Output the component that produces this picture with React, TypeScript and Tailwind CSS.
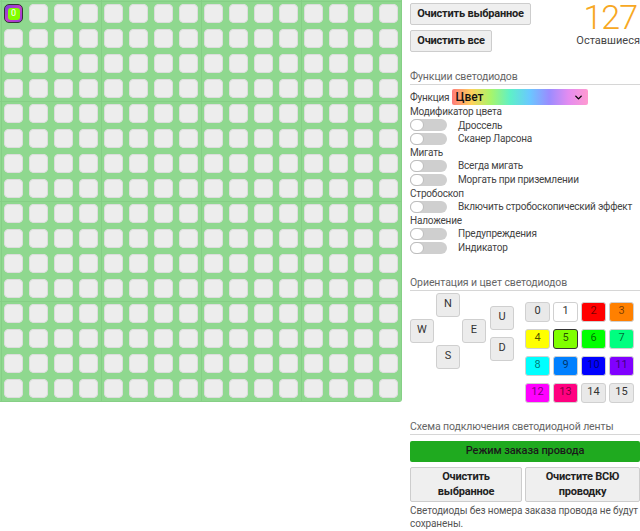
import { ChevronDown } from "lucide-react";

const swatches = [
  { n: 0, bg: "bg-[#e9e9e9]", text: "text-[#333]" },
  { n: 1, bg: "bg-white", text: "text-[#333]" },
  { n: 2, bg: "bg-[#ff0000]", text: "text-black/55" },
  { n: 3, bg: "bg-[#ff8000]", text: "text-black/55" },
  { n: 4, bg: "bg-[#ffff00]", text: "text-black/70" },
  { n: 5, bg: "bg-[#80ff00]", text: "text-black/70", active: true },
  { n: 6, bg: "bg-[#00ff00]", text: "text-black/60" },
  { n: 7, bg: "bg-[#00ff80]", text: "text-black/60" },
  { n: 8, bg: "bg-[#00ffff]", text: "text-black/55" },
  { n: 9, bg: "bg-[#0080ff]", text: "text-black/60" },
  { n: 10, bg: "bg-[#0000ff]", text: "text-black/55" },
  { n: 11, bg: "bg-[#8000ff]", text: "text-black/55" },
  { n: 12, bg: "bg-[#ff00ff]", text: "text-black/55" },
  { n: 13, bg: "bg-[#ff0080]", text: "text-black/55" },
  { n: 14, bg: "bg-[#e9e9e9]", text: "text-[#333]" },
  { n: 15, bg: "bg-[#e9e9e9]", text: "text-[#333]" },
];

const functionGroups = [
  { title: "Модификатор цвета", items: ["Дроссель", "Сканер Ларсона"] },
  { title: "Мигать", items: ["Всегда мигать", "Моргать при приземлении"] },
  { title: "Стробоскоп", items: ["Включить стробоскопический эффект"] },
  { title: "Наложение", items: ["Предупреждения", "Индикатор"] },
];

function Toggle() {
  return (
    <div className="relative h-[12px] w-[37px] shrink-0 rounded-full bg-[#cfcfcf]">
      <div className="absolute left-0 top-0 h-[12px] w-[14px] rounded-full border border-[#bdbdbd] bg-white" />
    </div>
  );
}

function SectionTitle({ children }: { children: string }) {
  return (
    <div className="border-b border-[#d6d6d6] pb-[1px] text-[10.5px] leading-[13px] tracking-[-0.1px] text-[#666]">
      {children}
    </div>
  );
}

function Cell({ index }: { index: number }) {
  if (index === 0) {
    return (
      <div className="flex h-[19px] w-[19px] items-center justify-center rounded-[5px] border border-[#333] bg-[linear-gradient(135deg,#7a3ee0,#c040c8,#9a3ad8)]">
        <div className="flex h-[12px] w-[12px] items-center justify-center rounded-[3px] bg-[#80ff00] text-[9px] leading-none text-white">
          0
        </div>
      </div>
    );
  }
  return (
    <div className="h-[19px] w-[19px] rounded-[5px] bg-[#ededed] shadow-[inset_0_0_0_1px_#dcdcdc]" />
  );
}

function DirButton({ label, className }: { label: string; className: string }) {
  return (
    <button
      className={`flex h-[24px] w-[24px] items-center justify-center rounded-[3px] border border-[#cfcfcf] bg-[#ececec] text-[11px] text-[#333] ${className}`}
    >
      {label}
    </button>
  );
}

export default function App() {
  return (
    <div className="flex h-[531px] w-[640px] gap-[8px] bg-white font-['Roboto',sans-serif] text-[#333]">
      {/* LED matrix */}
      <div className="grid h-[402px] w-[402px] shrink-0 grid-cols-[repeat(16,19px)] grid-rows-[repeat(16,19px)] gap-[6px] rounded-br-[3px] bg-[#8fd88f] p-[4px] [background-image:linear-gradient(to_right,#86cf86_1px,transparent_1px),linear-gradient(to_bottom,#86cf86_1px,transparent_1px)] [background-position:101px_101px] [background-size:100px_100px]">
        {Array.from({ length: 256 }, (_, i) => (
          <Cell key={i} index={i} />
        ))}
      </div>

      {/* Side panel */}
      <div className="flex w-[230px] flex-col">
        <div className="flex justify-between">
          <div className="flex flex-col gap-[5px] pt-[3px]">
            <button className="h-[22px] w-[121px] whitespace-nowrap rounded-[2px] border border-[#cdcdcd] bg-[#efefef] text-[11px] font-bold tracking-[-0.2px] text-[#222]">
              Очистить выбранное
            </button>
            <button className="h-[22px] w-[82px] whitespace-nowrap rounded-[2px] border border-[#cdcdcd] bg-[#efefef] text-[11px] font-bold tracking-[-0.2px] text-[#222]">
              Очистить все
            </button>
          </div>
          <div className="flex flex-col items-end">
            <div className="mr-[3px] text-[34px] font-light leading-[34px] tracking-[-1px] text-[#f7a823]">127</div>
            <div className="whitespace-nowrap text-[11px] leading-[13px] text-[#444]">Оставшиеся</div>
          </div>
        </div>

        <div className="mt-[18px]">
          <SectionTitle>Функции светодиодов</SectionTitle>
        </div>

        <div className="mt-[4px] flex items-center gap-[2px]">
          <span className="text-[10px] tracking-[-0.2px] text-[#444]">Функция</span>
          <div className="ml-[1px] flex h-[16px] w-[136px] items-center justify-between rounded-[2px] bg-[linear-gradient(to_right,#ff7a7a,#ffd15a,#a8f56a,#5ef0c8,#6ac8ff,#9a8cff,#e48cf0,#ff9ad0)] pl-[3px] pr-[4px] text-[12px] font-medium text-[#111]">
            <span className="leading-none">Цвет</span>
            <ChevronDown className="h-[11px] w-[11px] text-black" strokeWidth={3} />
          </div>
        </div>

        <div className="flex flex-col text-[10px] leading-[13.6px] tracking-[-0.2px] text-[#444]">
          {functionGroups.map((g) => (
            <div key={g.title} className="flex flex-col">
              <div>{g.title}</div>
              {g.items.map((item) => (
                <div key={item} className="flex h-[13.6px] items-center gap-[11px] whitespace-nowrap">
                  <Toggle />
                  <span>{item}</span>
                </div>
              ))}
            </div>
          ))}
        </div>

        <div className="mt-[21px]">
          <SectionTitle>Ориентация и цвет светодиодов</SectionTitle>
        </div>

        <div className="mt-[2px] flex">
          {/* compass pad */}
          <div className="relative h-[78px] w-[80px] shrink-0">
            <DirButton label="N" className="absolute left-[26px] top-[0px]" />
            <DirButton label="W" className="absolute left-[0px] top-[26px]" />
            <DirButton label="E" className="absolute left-[52px] top-[26px]" />
            <DirButton label="S" className="absolute left-[26px] top-[52px]" />
            <DirButton label="U" className="absolute left-[80px] top-[13px]" />
            <DirButton label="D" className="absolute left-[80px] top-[44px]" />
          </div>
          <div className="ml-[35px] mt-[9px] grid grid-cols-[repeat(4,25px)] gap-x-[3px] gap-y-[7px]">
            {swatches.map((s) => (
              <div
                key={s.n}
                className={`flex h-[20px] w-[25px] items-center justify-center rounded-[3px] text-[11px] ${s.bg} ${s.text} ${
                  s.active ? "border border-[#333]" : "border border-[#d0d0d0]"
                }`}
              >
                {s.n}
              </div>
            ))}
          </div>
        </div>

        <div className="mt-[17px]">
          <SectionTitle>Схема подключения светодиодной ленты</SectionTitle>
        </div>

        <button className="mt-[6px] h-[21px] w-full rounded-[2px] bg-[#1faa1f] text-[11px] font-medium tracking-[-0.1px] text-[#1a1a1a]">
          Режим заказа провода
        </button>

        <div className="mt-[5px] flex gap-[3px]">
          <button className="h-[35px] w-[112px] rounded-[2px] border border-[#cdcdcd] bg-[#efefef] text-[11px] font-bold leading-[15px] tracking-[-0.2px] text-[#222]">
            Очистить
            <br />
            выбранное
          </button>
          <button className="h-[35px] flex-1 rounded-[2px] border border-[#cdcdcd] bg-[#efefef] text-[11px] font-bold leading-[15px] tracking-[-0.2px] text-[#222]">
            Очистите ВСЮ
            <br />
            проводку
          </button>
        </div>

        <p className="mt-[2px] text-[10px] leading-[13px] tracking-[-0.1px] text-[#555]">
          Светодиоды без номера заказа провода не будут сохранены.
        </p>
      </div>
    </div>
  );
}
